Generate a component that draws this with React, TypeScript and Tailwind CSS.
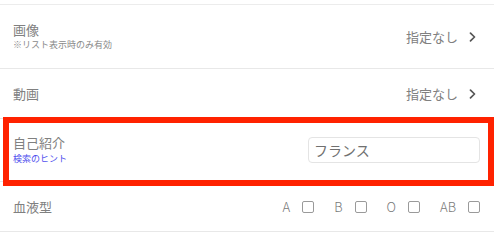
const jp = "font-['Noto_Sans_CJK_JP','Noto_Sans',sans-serif]";

function Chevron() {
  return (
    <svg width="7" height="10" viewBox="0 0 7 10" className="ml-[11px]">
      <path d="M1.5 1.2 L5.5 5 L1.5 8.8" fill="none" stroke="#555" strokeWidth="1.7" strokeLinecap="round" strokeLinejoin="round" />
    </svg>
  );
}

function Check({ label }: { label: string }) {
  return (
    <div className="flex items-center gap-[12px]">
      <span className="text-[13px] font-light text-[#777]">{label}</span>
      <span className="w-[12px] h-[12px] border border-[#9a9a9a] rounded-[2px] bg-white" />
    </div>
  );
}

export default function App() {
  return (
    <div className={`w-[500px] h-[242px] bg-white pt-[4px] ${jp}`}>
      <div className="w-[494px] border-t border-[#ececec]">
        <div className="h-[64px] flex items-center justify-between pl-[13px] pr-[18px] border-b border-[#e8e8e8]">
          <div className="flex flex-col">
            <span className="text-[13px] leading-[17px] text-[#808080]">画像</span>
            <span className="text-[9px] leading-[14px] text-[#8a8a8a]">※リスト表示時のみ有効</span>
          </div>
          <div className="flex items-center">
            <span className="text-[13px] text-[#808080]">指定なし</span>
            <Chevron />
          </div>
        </div>
        <div className="h-[50px] flex items-center justify-between pl-[13px] pr-[18px] border-b border-[#e8e8e8]">
          <span className="text-[13px] text-[#808080]">動画</span>
          <div className="flex items-center">
            <span className="text-[13px] text-[#808080]">指定なし</span>
            <Chevron />
          </div>
        </div>
        <div className="relative h-[63px] flex items-center justify-between pl-[13px] pr-[14px] border-b border-[#e8e8e8]">
          <div className="flex flex-col">
            <span className="text-[13px] leading-[18px] text-[#808080]">自己紹介</span>
            <span className="text-[9px] leading-[14px] text-[#5050ee]">検索のヒント</span>
          </div>
          <div className="w-[172px] h-[26px] border border-[#e4e4e4] rounded-[4px] flex items-center px-[5px] text-[14px] text-[#707070]">
            フランス
          </div>
          <div className="absolute left-[3px] top-[-2px] w-[491px] h-[69px] border-[6px] border-[#ff2200]" />
        </div>
        <div className="h-[50px] flex items-center justify-between pl-[13px] pr-[14px] border-b border-[#e8e8e8]">
          <span className="text-[13px] text-[#808080]">血液型</span>
          <div className="flex items-center gap-[20px]">
            <Check label="A" />
            <Check label="B" />
            <Check label="O" />
            <Check label="AB" />
          </div>
        </div>
      </div>
    </div>
  );
}
